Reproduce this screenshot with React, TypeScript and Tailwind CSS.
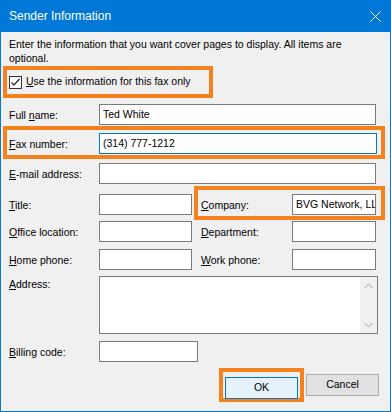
import React from "react";

// ─── Sender Information dialog ────────────────────────────────────────────────
// Windows-style fax cover page dialog, with orange call-out boxes around
// the fields that matter.

const FONT = { fontFamily: '"Liberation Sans", Arial, sans-serif' };

function Field({ value, width, focused, className = "" }: { value?: string; width: string; focused?: boolean; className?: string }) {
  return (
    <div
      className={`h-[21px] ${width} shrink-0 bg-white border ${focused ? "border-[#0078d7]" : "border-[#7a7a7a]"} pl-[3px] flex items-center overflow-hidden whitespace-nowrap text-[10.5px] text-black ${className}`}
    >
      {value}
    </div>
  );
}

function Label({ k, rest, width = "w-[90px]" }: { k: string; rest: string; width?: string }) {
  return (
    <span className={`${width} shrink-0 text-[10.5px] leading-[14px] text-black whitespace-nowrap`}>
      <u>{k}</u>
      {rest}
    </span>
  );
}

function LabelMid({ pre, k, rest }: { pre: string; k: string; rest: string }) {
  return (
    <span className="w-[90px] shrink-0 text-[10.5px] leading-[14px] text-black whitespace-nowrap">
      {pre}
      <u>{k}</u>
      {rest}
    </span>
  );
}

export default function App() {
  return (
    <div className="w-[391px] h-[412px] flex flex-col bg-[#f0f0f0] overflow-hidden" style={FONT}>
      {/* ── Title bar ── */}
      <div className="h-[32px] shrink-0 bg-[#0078d7] flex items-center justify-between pl-[9px] pr-[10px]">
        <span className="text-white text-[12px]">Sender Information</span>
        <svg width="11" height="11" viewBox="0 0 11 11">
          <path d="M0.5 0.5 L10.5 10.5 M10.5 0.5 L0.5 10.5" stroke="white" strokeWidth="1" fill="none" />
        </svg>
      </div>

      {/* ── Body ── */}
      <div className="flex-1 flex flex-col border-x border-b border-[#0078d7]">
        <p className="ml-[8px] mt-[5px] mr-[6px] text-[10.5px] leading-[14px] text-black">
          Enter the information that you want cover pages to display. All items are optional.
        </p>

        {/* Checkbox call-out */}
        <div className="ml-[2px] mt-[1px] w-[210px] h-[32px] border-4 border-[#f6821f] flex items-center pl-[2px] gap-[4px]">
          <div className="w-[13px] h-[13px] bg-white border border-[#333333] flex items-center justify-center">
            <svg width="11" height="11" viewBox="0 0 11 11">
              <path d="M1.5 5.5 L4 8 L9.5 2" stroke="#1a1a1a" strokeWidth="1.2" fill="none" />
            </svg>
          </div>
          <span className="text-[10.5px] text-black whitespace-nowrap">
            <u>U</u>se the information for this fax only
          </span>
        </div>

        {/* Full name */}
        <div className="ml-[8px] mt-[6px] flex items-center">
          <LabelMid pre="Full " k="n" rest="ame:" />
          <Field value="Ted White" width="w-[277px]" />
        </div>

        {/* Fax call-out */}
        <div className="ml-[2px] mt-[1px] w-[382px] h-[33px] border-4 border-[#f6821f] flex items-start pl-[2px] pt-[3px]">
          <div className="h-[21px] flex items-center">
            <Label k="F" rest="ax number:" />
          </div>
          <Field value="(314) 777-1212" width="w-[278px]" focused />
        </div>

        {/* E-mail */}
        <div className="ml-[8px] mt-[4px] flex items-center">
          <Label k="E" rest="-mail address:" />
          <Field width="w-[277px]" />
        </div>

        {/* Title + Company call-out */}
        <div className="ml-[8px] mt-[2px] flex items-start">
          <div className="mt-[8px] flex items-center">
            <Label k="T" rest="itle:" />
            <Field width="w-[93px]" />
          </div>
          <div className="ml-[2px] w-[191px] h-[34px] border-4 border-[#f6821f] flex items-start pl-[3px] pt-[4px]">
            <div className="h-[21px] flex items-center">
              <Label k="C" rest="ompany:" width="w-[91px]" />
            </div>
            <Field value="BVG Network, LLC" width="w-[84px]" />
          </div>
        </div>

        {/* Office / Department */}
        <div className="ml-[8px] mt-[1px] flex items-center">
          <Label k="O" rest="ffice location:" />
          <Field width="w-[93px]" />
          <div className="ml-[9px] flex items-center">
            <Label k="D" rest="epartment:" width="w-[91px]" />
            <Field width="w-[84px]" />
          </div>
        </div>

        {/* Home / Work phone */}
        <div className="ml-[8px] mt-[7px] flex items-center">
          <Label k="H" rest="ome phone:" />
          <Field width="w-[93px]" />
          <div className="ml-[9px] flex items-center">
            <Label k="W" rest="ork phone:" width="w-[91px]" />
            <Field width="w-[84px]" />
          </div>
        </div>

        {/* Address */}
        <div className="ml-[8px] mt-[6px] flex items-start">
          <div className="pt-[1px] flex">
            <Label k="A" rest="ddress:" />
          </div>
          <div className="w-[279px] h-[58px] bg-white border border-[#7a7a7a] flex">
            <div className="flex-1" />
            <div className="w-[17px] bg-[#f0f0f0] flex flex-col justify-between">
              <div className="h-[17px] flex items-center justify-center">
                <svg width="9" height="6" viewBox="0 0 9 6">
                  <path d="M0.5 5 L4.5 1 L8.5 5" stroke="#a6a6a6" strokeWidth="1" fill="none" />
                </svg>
              </div>
              <div className="h-[17px] flex items-center justify-center">
                <svg width="9" height="6" viewBox="0 0 9 6">
                  <path d="M0.5 1 L4.5 5 L8.5 1" stroke="#a6a6a6" strokeWidth="1" fill="none" />
                </svg>
              </div>
            </div>
          </div>
        </div>

        {/* Billing code */}
        <div className="ml-[8px] mt-[7px] flex items-center">
          <Label k="B" rest="illing code:" />
          <Field width="w-[99px]" />
        </div>

        {/* Buttons */}
        <div className="mt-[6px] mr-[11px] flex items-center justify-end gap-[2px]">
          <div className="w-[85px] h-[34px] border-4 border-[#f6821f] p-[2px]">
            <button className="w-full h-full bg-[#e5f1fb] border border-[#0078d7] text-[10.5px] text-black">
              OK
            </button>
          </div>
          <button className="w-[73px] h-[22px] bg-[#e1e1e1] border border-[#adadad] text-[10.5px] text-black">
            Cancel
          </button>
        </div>
      </div>
    </div>
  );
}
